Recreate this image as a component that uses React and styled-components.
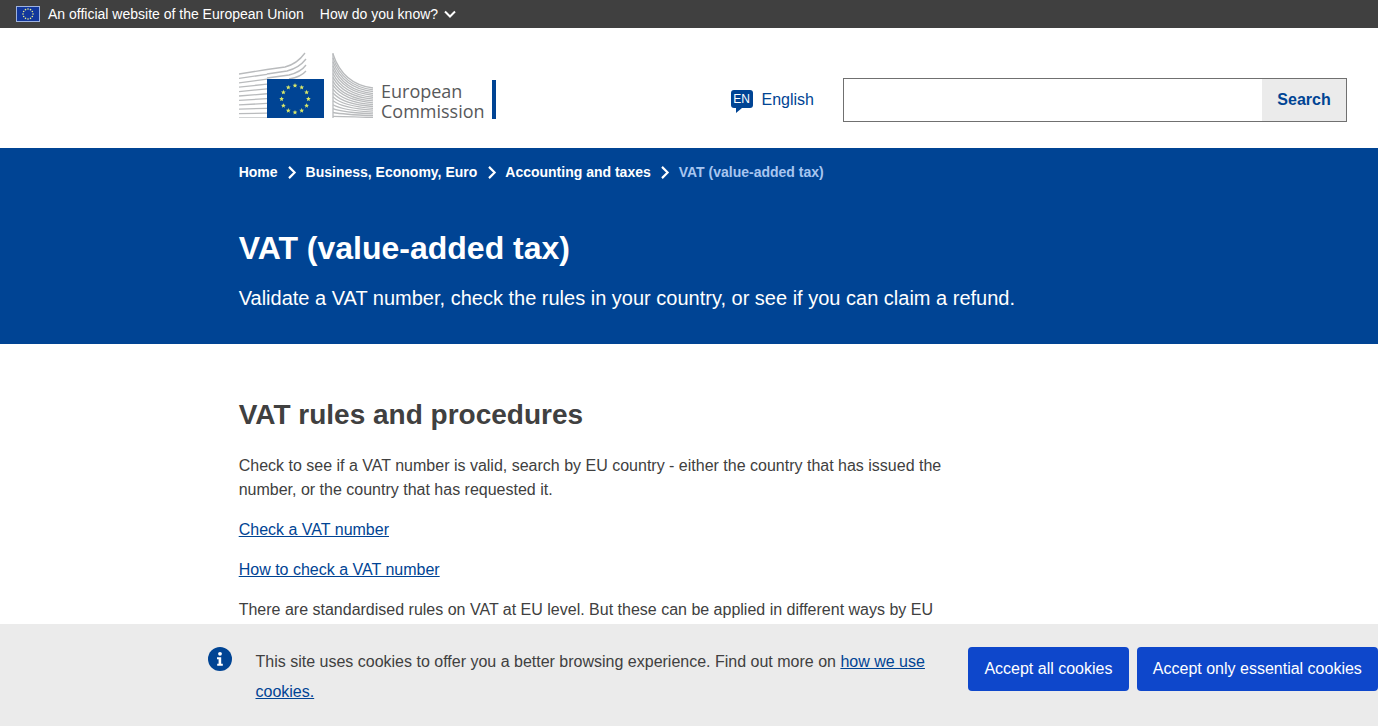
import React from "react";
import styled, { createGlobalStyle } from "styled-components";

const Global = createGlobalStyle`
  html, body { margin: 0; padding: 0; height: 100%; overflow: hidden; background: #fff; }
  body { font-family: "Liberation Sans", Arial, sans-serif; color: #404040; }
  * { box-sizing: border-box; }
`;

const GlobanBar = styled.div`
  height: 28px; background: #404040; color: #fff; display: flex; align-items: center;
  padding-left: 16px; font-size: 14px;
`;
const FlagWrap = styled.span`display: flex; margin-right: 8px;`;
const GlobanText = styled.span`margin-right: 16px;`;
const HowLink = styled.span`display: flex; align-items: center; gap: 5px;`;

const SiteHeader = styled.header`
  height: 120px; display: flex; align-items: center; padding: 0 31px 0 239px; background: #fff;
`;
const Logo = styled.div`display: flex; align-items: flex-start; width: 257px; height: 66px; margin-top: -6px;`;
const LogoWords = styled.div`
  font-family: "Open Sans", sans-serif; font-size: 18px; line-height: 20px; color: #58595b;
  margin: 29px 0 0 2px;
`;
const LogoLine = styled.span`display: block; height: 20px;`;
const LogoBar = styled.div`width: 4px; height: 39px; background: #004494; margin: 28px 0 0 auto;`;

const Controls = styled.div`display: flex; align-items: center; margin: 24px 0 0 auto;`;
const Lang = styled.div`
  display: flex; align-items: center; gap: 9px; color: #004494; font-size: 16px; margin-right: 29px;
`;
const LangBadge = styled.span`
  position: relative; width: 22px; height: 18px; background: #004494; color: #fff; border-radius: 3px;
  font-size: 12px; display: flex; align-items: center; justify-content: center; margin-top: -3px;
  &::after {
    content: ""; position: absolute; left: 5px; bottom: -5px; width: 0; height: 0;
    border-top: 5px solid #004494; border-right: 6px solid transparent;
  }
`;
const SearchBox = styled.form`
  width: 504px; height: 44px; border: 1px solid #707070; display: flex; margin: 0; background: #fff;
`;
const SearchInput = styled.div`flex: 1;`;
const SearchButton = styled.div`
  width: 84px; background: #ebebeb; color: #004494; font-weight: 700; font-size: 16px;
  display: flex; align-items: center; justify-content: center;
`;

const Hero = styled.section`
  height: 196px; background: #004494; color: #fff; padding: 16px 0 0 238.7px;
`;
const Crumbs = styled.nav`display: flex; align-items: center; font-size: 14px; font-weight: 700; line-height: 16px;`;
const Crumb = styled.span`color: ${p => (p.$current ? "#a8c6f0" : "#fff")};`;
const CrumbSep = styled.span`display: flex; width: 28px; justify-content: center;`;
const Title = styled.h1`margin: 48px 0 0; font-size: 32px; line-height: 40px; font-weight: 700;`;
const Lead = styled.p`margin: 18px 0 0; font-size: 20px; line-height: 24px;`;

const Main = styled.main`padding: 53px 0 0 238.7px; width: 958px;`;
const H2 = styled.h2`margin: 0 0 21px; font-size: 28px; line-height: 36px; font-weight: 700; color: #404040;`;
const Para = styled.p`margin: 0 0 16px; font-size: 16px; line-height: 24px; color: #404040;`;
const Link = styled.a`color: #004494; text-decoration: underline;`;

const Cookie = styled.aside`
  position: fixed; left: 0; right: 0; bottom: 0; height: 102px; background: #ebebeb;
  display: flex; align-items: flex-start; padding: 23px 0 0 208px;
`;
const InfoIcon = styled.svg`flex: none; margin-right: 23.5px;`;
const CookieText = styled.p`
  margin: 0 39.9px 0 0; width: 673px; font-size: 16px; line-height: 30px; color: #404040; flex: none;
`;
const Buttons = styled.div`display: flex; gap: 8px; flex: none;`;
const AcceptButton = styled.div`
  height: 44px; background: #0e47cb; color: #fff; font-size: 16px; border-radius: 4px; padding: 0 16.4px 0 16px;
  display: flex; align-items: center; white-space: nowrap;
`;

const Chevron = () => (
  <svg width="15" height="15" viewBox="0 0 12 12" fill="none" stroke="#fff" strokeWidth="1.7">
    <path d="M4 1.5l4.5 4.5L4 10.5" />
  </svg>
);
const ChevronDown = () => (
  <svg width="14" height="14" viewBox="0 0 14 14" fill="none" stroke="#fff" strokeWidth="2">
    <path d="M2 4.5l5 5 5-5" />
  </svg>
);

const starPoints = (r, n) =>
  Array.from({ length: n }, (_, i) => {
    const a = (i / n) * Math.PI * 2;
    return [Math.sin(a) * r, -Math.cos(a) * r];
  });

const EuFlag = () => (
  <svg width="24" height="16" viewBox="0 0 24 16">
    <rect x="0.5" y="0.5" width="23" height="15" fill="#12379c" stroke="#9db2de" />
    {starPoints(5, 12).map(([x, y], i) => (
      <circle key={i} cx={12 + x} cy={8 + y} r="0.8" fill="#e6e88a" />
    ))}
  </svg>
);

const Star = ({ x, y, r }) => {
  const pts = Array.from({ length: 10 }, (_, i) => {
    const a = (i / 10) * Math.PI * 2;
    const rr = i % 2 ? r * 0.45 : r;
    return `${x + Math.sin(a) * rr},${y - Math.cos(a) * rr}`;
  }).join(" ");
  return <polygon points={pts} fill="#d9e86a" />;
};

const LogoMark = () => {
  const left = [];
  for (let i = 0; i < 11; i++) {
    const y0 = 22 + i * 4.4;
    const y1 = y0 - (10 - i) * 0.45;
    left.push(<path key={i} d={`M0 ${y0} L28 ${y1}`} />);
  }
  const curves = [
    "M28 17.5 L46 15 Q 58 12 66 1",
    "M28 22 L48 19 Q 60 16 67 7",
    "M28 26 L50 23 Q 62 20 67 13",
    "M50 27 Q 62 25 67 19",
  ];
  const right = [];
  for (let i = 0; i < 17; i++) {
    const y = 2 + i * 3.9;
    const yEnd = 36 + i * 1.85;
    right.push(<path key={i} d={`M94 ${y} Q 104 ${y + (16 - i) * 1.9} 134 ${yEnd}`} />);
  }
  return (
    <svg width="140" height="66" viewBox="0 0 140 66">
      <g fill="none" stroke="#b9bbbd" strokeWidth="1.3">
        {left}
        {curves.map(d => <path key={d} d={d} />)}
        {right}
        <path d="M94 1v65" />
      </g>
      <rect x="28" y="27" width="57" height="39.5" fill="#004494" />
      {starPoints(13.4, 12).map(([x, y], i) => (
        <Star key={i} x={56 + x} y={47 + y} r={2.5} />
      ))}
    </svg>
  );
};

export default function App() {
  return (
    <>
      <Global />
      <GlobanBar>
        <FlagWrap><EuFlag /></FlagWrap>
        <GlobanText>An official website of the European Union</GlobanText>
        <HowLink>How do you know? <ChevronDown /></HowLink>
      </GlobanBar>
      <SiteHeader>
        <Logo>
          <LogoMark />
          <LogoWords><LogoLine>European</LogoLine><LogoLine>Commission</LogoLine></LogoWords>
          <LogoBar />
        </Logo>
        <Controls>
          <Lang><LangBadge>EN</LangBadge>English</Lang>
          <SearchBox>
            <SearchInput />
            <SearchButton>Search</SearchButton>
          </SearchBox>
        </Controls>
      </SiteHeader>
      <Hero>
        <Crumbs>
          <Crumb>Home</Crumb><CrumbSep><Chevron /></CrumbSep>
          <Crumb>Business, Economy, Euro</Crumb><CrumbSep><Chevron /></CrumbSep>
          <Crumb>Accounting and taxes</Crumb><CrumbSep><Chevron /></CrumbSep>
          <Crumb $current>VAT (value-added tax)</Crumb>
        </Crumbs>
        <Title>VAT (value-added tax)</Title>
        <Lead>Validate a VAT number, check the rules in your country, or see if you can claim a refund.</Lead>
      </Hero>
      <Main>
        <H2>VAT rules and procedures</H2>
        <Para>Check to see if a VAT number is valid, search by EU country - either the country that has issued the number, or the country that has requested it.</Para>
        <Para><Link href="#">Check a VAT number</Link></Para>
        <Para><Link href="#">How to check a VAT number</Link></Para>
        <Para>There are standardised rules on VAT at EU level. But these can be applied in different ways by EU countries.</Para>
      </Main>
      <Cookie>
        <InfoIcon width="24" height="24" viewBox="0 0 24 24">
          <circle cx="12" cy="12" r="12" fill="#004494" />
          <circle cx="12" cy="6.8" r="1.9" fill="#fff" />
          <path d="M9 10.2h4.2v6.6h1.6v2H9.2v-2h1.4v-4.6H9z" fill="#fff" />
        </InfoIcon>
        <CookieText>This site uses cookies to offer you a better browsing experience. Find out more on <Link href="#">how we use cookies.</Link></CookieText>
        <Buttons>
          <AcceptButton>Accept all cookies</AcceptButton>
          <AcceptButton>Accept only essential cookies</AcceptButton>
        </Buttons>
      </Cookie>
    </>
  );
}
